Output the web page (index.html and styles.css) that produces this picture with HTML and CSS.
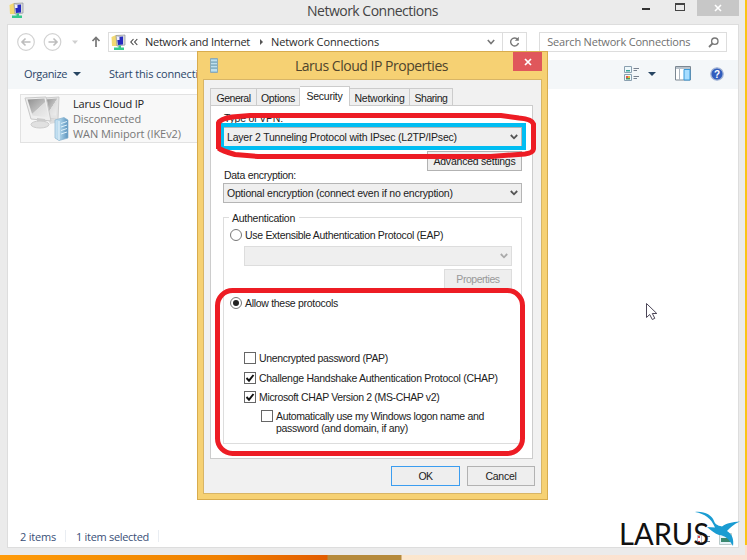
FILE: index.html
```html
<!DOCTYPE html>
<html lang="en">
<head>
<meta charset="utf-8">
<title>Network Connections</title>
<link rel="stylesheet" href="styles.css">
</head>
<body>
<div class="desktop">
  <main class="window">
    <header class="titlebar">
      <svg class="app-icon" width="16" height="17" viewBox="0 0 16 17"><use href="#netfolder"/></svg>
      <h1><span class="t-title">Network Connections</span></h1>
      <div class="controls"><i class="minimize"></i><i class="maximize"></i>
        <span class="close"><svg width="8" height="8" viewBox="0 0 8 8"><path d="M1 1l6 6M7 1L1 7" stroke="#fff" stroke-width="1.6"/></svg></span></div>
    </header>
    <section class="content">
      <nav class="navbar">
        <svg class="nav-arrows" width="86" height="20" viewBox="0 0 86 20" fill="none" stroke="#d2d2d2" stroke-width="1.2">
          <circle cx="9" cy="10" r="8.3"/><circle cx="35.5" cy="10" r="8.3"/>
          <path d="M5 10h8.5M8.500 6.500L5 10l3.500 3.500M31.500 10H40M36.500 6.500L40 10l-3.500 3.500" stroke="#bdbdbd" stroke-width="1.6"/>
          <path d="M55 8.500h6l-3 3.500z" fill="#cfcfcf" stroke="none"/>
          <path d="M79 15V5.500M75.500 9L79 5.500 82.500 9" stroke="#777" stroke-width="1.7"/>
        </svg>
        <div class="address">
          <svg width="16" height="17" viewBox="0 0 16 17"><use href="#netfolder"/></svg>
          <svg class="chev" width="8" height="8" viewBox="0 0 8 8" fill="none" stroke="#444" stroke-width="1.1"><path d="M3.500 1L.8 4l2.700 3M7.300 1L4.600 4l2.700 3"/></svg>
          <span class="crumb t-net">Network and Internet</span>
          <svg class="sep" width="5" height="8" viewBox="0 0 5 8"><path d="M1 1L4 4 1 7z" fill="#555"/></svg>
          <span class="crumb t-conn">Network Connections</span>
          <svg class="drop" width="8" height="6" viewBox="0 0 8 6"><path d="M.8 1L4 4.500 7.200 1" fill="none" stroke="#777" stroke-width="1.6"/></svg>
        </div>
        <div class="refresh"><svg width="11" height="12" viewBox="0 0 11 12"><path d="M8.800 3.500A4 4 0 1 0 9.500 7" fill="none" stroke="#777" stroke-width="1.4"/><path d="M9.800.8v4H5.800z" fill="#777"/></svg></div>
        <div class="search"><span class="t-search">Search Network Connections</span>
          <svg width="11" height="11" viewBox="0 0 11 11" fill="none" stroke="#777"><circle cx="6.8" cy="4.2" r="3.2" stroke-width="1.3"/><path d="M4.400 6.600L1 10" stroke-width="1.8"/></svg></div>
      </nav>
      <div class="toolbar">
        <span class="t-org">Organize</span><i class="caret"></i>
        <span class="start t-start">Start this connection</span>
        <div class="view-tools">
          <svg width="16" height="16" viewBox="0 0 16 16"><path d="M.5.500h7v6h-7zM.5 8.500h7v6h-7z" fill="#eef8fb" stroke="#8aa0b0"/><path d="M2 4h4v1.500H2z" fill="#38a59c"/><path d="M2 10h2v2H2z" fill="#d55"/><path d="M4 10h2v2H4z" fill="#e9bb37"/><path d="M2 12h4v1.500H2z" fill="#4a9b61"/><path d="M9.500 2.500H15M9.500 4.500H13M9.500 10.500H15M9.500 12.500H13" stroke="#78818f"/></svg>
          <i class="caret view-caret"></i>
          <svg class="pane" width="16" height="15" viewBox="0 0 16 15"><path d="M.5.500h15v13.500H.5z" fill="#fff" stroke="#7b8792"/><path d="M1 1h14v2H1z" fill="#b9c3cc"/><path d="M9 3.500h6V14H9z" fill="#a7ddff" stroke="#3898d8"/><path d="M4.500 3v11" stroke="#aab4be"/></svg>
          <svg class="help" width="14" height="14" viewBox="0 0 14 14"><circle cx="7" cy="7" r="6.2" fill="#315dbd" stroke="#a7b6d5" stroke-width="1.3"/><text x="7" y="10.8" text-anchor="middle">?</text></svg>
        </div>
      </div>
      <div class="files">
        <article class="connection">
          <svg width="48" height="46" viewBox="0 0 48 46">
            <defs><linearGradient id="scr" x2="1" y2="1"><stop stop-color="#8f8f8f"/><stop offset=".5" stop-color="#bdbdbd"/><stop offset=".52" stop-color="#dedede"/><stop offset="1" stop-color="#eee"/></linearGradient><linearGradient id="srv" x2="1"><stop stop-color="#cde6f5"/><stop offset=".45" stop-color="#a2cbe4"/><stop offset="1" stop-color="#5b93bd"/></linearGradient></defs>
            <path d="M20 2l15-1-1 22-12-1z" fill="#e4e4e4" stroke="#ccc"/><path d="M22 3.500l11-1-1 17-10-1z" fill="url(#scr)"/>
            <path d="M24 23l9-1 3 4-10 2z" fill="#ddd"/>
            <path d="M1 2l21-1 5 24-20-2z" fill="#eee" stroke="#c9c9c9"/><path d="M3.500 3.500l17-1 4 19-16-2z" fill="url(#scr)"/>
            <path d="M13 22l8 1 1 5h-9z" fill="#ccc"/><ellipse cx="16" cy="28.5" rx="9" ry="3.5" fill="#e1e1e1" stroke="#ccc"/>
            <path d="M31 24l9-2.500 4 2.500v18l-9 2.500-4-2.500z" fill="url(#srv)" stroke="#87b2ce" stroke-width=".7"/><path d="M35 25v19" stroke="#ecf7fd"/><path d="M37 27.500l6-2M37 31l6-2M37 34.500l6-2M37 38l6-2" stroke="#e0f2fb"/>
          </svg>
          <div class="details"><b class="t-larus">Larus Cloud IP</b><span class="t-disc">Disconnected</span><span class="t-wan">WAN Miniport (IKEv2)</span></div>
        </article>
      </div>
      <footer class="status"><span class="t-items">2 items</span><i></i><span class="t-sel">1 item selected</span><i></i></footer>
    </section>
  </main>

  <section class="dialog">
    <header class="dialog-title">
      <svg width="8" height="15" viewBox="0 0 8 15"><path d="M.5.500h7v14h-7z" fill="#9dcae0" stroke="#8fa9b2"/><path d="M1 3h6M1 6h6M1 9h6M1 12h6" stroke="#e2f4fb"/><path d="M1 4h6M1 7h6M1 10h6" stroke="#6f9aae"/></svg>
      <h2><span class="t-dlg">Larus Cloud IP Properties</span></h2>
      <span class="dialog-close"><svg width="8" height="8" viewBox="0 0 8 8"><path d="M1 1l6 6M7 1L1 7" stroke="#fff" stroke-width="1.7"/></svg></span>
    </header>
    <div class="dialog-body">
      <div class="tabs">
        <span class="tab gen"><span class="t-gen">General</span></span><span class="tab opt"><span class="t-opt">Options</span></span><span class="tab sec"><span class="t-sec">Security</span></span><span class="tab ntw"><span class="t-ntw">Networking</span></span><span class="tab shr"><span class="t-shr">Sharing</span></span>
      </div>
      <div class="panel">
        <div class="vpn-label"><span class="t-type">Type of VPN:</span></div>
        <div class="select vpn"><span class="t-layer">Layer 2 Tunneling Protocol with IPsec (L2TP/IPsec)</span><svg width="8" height="6" viewBox="0 0 8 6"><path d="M.8 1L4 4.300 7.200 1"/></svg></div>
        <div class="button advanced"><span class="t-adv">Advanced settings</span></div>
        <div class="enc-label"><span class="t-data">Data encryption:</span></div>
        <div class="select"><span class="t-optenc">Optional encryption (connect even if no encryption)</span><svg width="8" height="6" viewBox="0 0 8 6"><path d="M.8 1L4 4.300 7.200 1"/></svg></div>
        <div class="group">
          <div class="legend"><span class="t-auth">Authentication</span></div>
          <div class="row eap"><i class="radio"></i><span class="t-eap">Use Extensible Authentication Protocol (EAP)</span></div>
          <div class="select disabled"><svg width="8" height="6" viewBox="0 0 8 6"><path d="M.8 1L4 4.300 7.200 1"/></svg></div>
          <div class="button props"><span class="t-prop">Properties</span></div>
          <div class="row allow"><i class="radio on"></i><span class="t-allow">Allow these protocols</span></div>
          <div class="row check pap"><i class="box"></i><span class="t-pap">Unencrypted password (PAP)</span></div>
          <div class="row check"><i class="box"><svg width="10" height="10" viewBox="0 0 10 10"><path d="M1.500 5l2.500 2.700L8.500 2"/></svg></i><span class="t-chap">Challenge Handshake Authentication Protocol (CHAP)</span></div>
          <div class="row check ms"><i class="box"><svg width="10" height="10" viewBox="0 0 10 10"><path d="M1.500 5l2.500 2.700L8.500 2"/></svg></i><span class="t-ms">Microsoft CHAP Version 2 (MS-CHAP v2)</span></div>
          <div class="row check auto"><i class="box"></i><div class="lines"><span class="t-auto">Automatically use my Windows logon name and</span><span class="t-pass">password (and domain, if any)</span></div></div>
        </div>
      </div>
      <div class="actions"><div class="button ok"><span class="t-ok">OK</span></div><div class="button cancel"><span class="t-can">Cancel</span></div></div>
    </div>
  </section>

  <svg class="marks" width="747" height="560" viewBox="0 0 747 560" fill="none">
    <path d="M222 125H524V148H222z" stroke="#00bdf2" stroke-width="4"/>
    <path d="M218.500 149V123Q220 119 232 117L250 115.500H501L519 118Q532 119 533.500 124V149Q533 153 525 154L491 156.500H258L235 154.500Q222 151 218.500 148" stroke="#ed1c24" stroke-width="5"/>
    <rect x="217.5" y="290.5" width="305" height="163" rx="15" stroke="#ed1c24" stroke-width="5"/>
    <path d="M646.500 303.500v14l3.200-3 2.600 5 2.500-1.200-2.500-4.800h4.500z" fill="#fff" stroke="#4b4657"/>
  </svg>
  <div class="brand">
    <svg width="125" height="42" viewBox="0 0 125 42">
      <path d="M77.500 25.500h4v9h-4z" fill="#fff" stroke="#bbc"/><path d="M78 26h2v2h-2zM78 31h2v2h-2z" fill="#d44"/><path d="M85 26.500h5M85 31.500h5" stroke="#678"/>
      <path d="M99.500 23.500h12v11h-12z" fill="#e6f3f8" stroke="#bcc"/><path d="M101 28h9v4h-9z" fill="#3a8970"/>
      <path d="M75 2C84 1 92 5 94 11C95 14 97 15.500 102 16.500C107 13 112 12 120 11.500C114 14 110 17.500 107 21C112 24 114 29 113 36C109 29 105 25.500 99 25C95 24 91 20 87 17L95 17.500C91 8 85 4 75 2z" fill="#1a9cd2"/>
      <text class="logo-text" x="-1" y="35" textLength="90" lengthAdjust="spacingAndGlyphs">LARUS</text>
    </svg>
  </div>
</div>
<svg class="symbols" width="0" height="0"><symbol id="netfolder" viewBox="0 0 16 17"><path d="M.5 3L5 1h5v11H1z" fill="#f2d972"/><path d="M5 1.500l9-.5v10l-8 1z" fill="#d7d9dc" stroke="#8e929b" stroke-width=".7"/><path d="M6 3l6-.5v8l-5 .5z" fill="#252ac0"/><path d="M6 3h2.500v3H6z" fill="#eef"/><path d="M7.500 11.500h2.500v2h3v2.500H3v-2.500h4.500z" fill="#35c98c"/></symbol></svg>
</body>
</html>
```
FILE: styles.css
```css
* { box-sizing: border-box; }
body { margin: 0; width: 747px; height: 560px; overflow: hidden; font-family: "Open Sans", sans-serif; }
svg { display: block; flex: none; }
i { display: block; flex: none; }
.symbols { position: absolute; }
.desktop { position: relative; width: 747px; height: 560px; overflow: hidden; background: linear-gradient(#fbc414, #fbc414) right top / 2px 545px no-repeat, linear-gradient(90deg, #ff9b0a 0, #f58f04 110px, #f08000 220px, #e25c00 327px, #b58a3c 328px, #b58a3c 401px, #fbe6cd 402px, #fbe0d3 100%); }
.window { width: 745px; height: 555px; padding: 0 6px 7px 7px; background: #ebebeb; }
.titlebar { display: flex; height: 24px; position: relative; }
.app-icon { margin: 2px 0 0 2px; }
.titlebar h1 { flex: 1; margin: 0 0 0 282px; font-size: 14px; line-height: 22px; font-weight: 400; color: #444; white-space: nowrap; }
.controls { display: flex; }
.minimize { width: 8px; height: 2px; margin: 8px 25px 0 0; background: #333; }
.maximize { width: 10px; height: 8px; margin: 3px 12px 0 0; border: 1px solid #444; border-top-width: 2px; }
.close { display: flex; width: 42px; height: 16px; background: #c7c7c7; justify-content: center; align-items: center; }
.content { display: flex; flex-direction: column; width: 732px; height: 524px; background: #fff; border: 1px solid #ddd; }
.navbar { display: flex; height: 35px; padding: 7px 11px 8px 9px; align-items: center; font-size: 11px; white-space: nowrap; }
.nav-arrows { width: 86px; }
.address { display: flex; align-items: center; width: 396px; height: 20px; margin-left: 5px; padding-left: 2px; border: 1px solid #ddd; color: #2b2b2b; }
.crumb { line-height: 14px; }
.chev { margin: 0 7px 0 3px; }
.sep { margin: 0 7px 0 9px; }
.drop { margin-left: auto; margin-right: 7px; }
.refresh { display: flex; align-items: center; justify-content: center; width: 24px; height: 20px; border: 1px solid #ddd; border-left: 0; }
.search { display: flex; align-items: center; justify-content: space-between; width: 188px; height: 20px; margin-left: 12px; padding: 0 7px; border: 1px solid #ddd; color: #707070; }
.t-search { line-height: 14px; }
.toolbar { display: flex; align-items: center; height: 29px; padding: 0 14px 2px 16px; background: #f4f7f9; color: #2c4668; font-size: 11px; white-space: nowrap; }
.caret { width: 0; height: 0; margin-left: 6px; border: 4px solid transparent; border-top-color: #274562; border-bottom: 0; }
.start { margin-left: 28px; }
.view-tools { display: flex; align-items: center; margin-left: auto; }
.view-caret { margin-left: 8px; }
.pane { margin-left: 19px; }
.help { margin-left: 19px; }
.help text { font: bold 10px "Liberation Sans", sans-serif; fill: #fff; }
.files { flex: 1; padding: 5px 12px; }
.connection { display: flex; width: 230px; height: 49px; border: 1px solid #e2e2e2; background: #f8f8f8; padding: 1px 3px; font-size: 11px; line-height: 15px; color: #777; white-space: nowrap; }
.details { display: flex; flex-direction: column; align-items: flex-start; margin-left: 1px; }
.details b { font-weight: 400; color: #222; }
.status { display: flex; align-items: center; height: 22px; padding: 0 12px; font-size: 11px; color: #3a4f77; }
.status i { width: 1px; height: 12px; margin: 0 10px 0 9px; background: #e9edf2; }
.dialog { position: absolute; left: 197px; top: 51px; width: 351px; height: 449px; padding: 0 5px; background: #f6d173; border: 1px solid #d8ac4e; }
.dialog-title { display: flex; height: 27px; padding-left: 7px; }
.dialog-title > svg { margin-top: 6px; }
.dialog-title h2 { flex: 1; margin: 0 0 0 77px; font-size: 14px; line-height: 28px; font-weight: 400; color: #4f442c; white-space: nowrap; }
.dialog-close { display: flex; align-items: center; justify-content: center; width: 29px; height: 19px; background: #e0575b; }
.dialog-body { height: 415px; border: 1px solid #d8b566; background: #f1f1f1; padding: 6px 6px 0; font: 10.5px "Liberation Sans", sans-serif; color: #222; }
.tabs { display: flex; height: 19px; align-items: flex-end; white-space: nowrap; }
.tab { display: flex; justify-content: center; align-items: center; height: 17px; padding-top: 1px; border: 1px solid #ccc; border-bottom: 0; border-left-width: 0; background: #efefef; }
.tab.gen { width: 47px; border-left-width: 1px; }
.tab.opt { width: 43px; }
.tab.sec { width: 50px; height: 20px; margin-bottom: -1px; background: #fff; padding: 0 0 1px; }
.tab.ntw { width: 60px; }
.tab.shr { width: 43px; }
.panel { width: 323px; height: 354px; border: 1px solid #ccc; background: #fff; padding: 0 10px 0 12px; white-space: nowrap; }
.vpn-label { height: 21px; padding-left: 1px; line-height: 25px; }
.select { display: flex; align-items: center; justify-content: space-between; width: 299px; height: 20px; padding: 0 3px; border: 1px solid #b5b5b5; background: #efefef; }
.select path { fill: none; stroke: #555; stroke-width: 1.8; }
.button { display: flex; align-items: center; justify-content: center; height: 20px; border: 1px solid #b2b2b2; background: #eee; }
.advanced { width: 95px; margin: 4px 0 0 204px; }
.enc-label { height: 12px; padding-left: 1px; line-height: 8px; }
.group { width: 299px; height: 227px; margin-top: 14px; border: 1px solid #ddd; }
.legend { width: 70px; height: 12px; margin: -6px 0 0 5px; padding-left: 3px; background: #fff; line-height: 12px; }
.row { display: flex; align-items: center; height: 14px; }
.eap { margin: 4px 0 0 6px; }
.radio { width: 12px; height: 12px; margin-right: 3px; border: 1px solid #777; border-radius: 50%; background: #fff; }
.radio.on { padding: 2px; background: #222 content-box; background-clip: content-box; }
.disabled { width: 268px; margin: 4px 0 0 20px; border-color: #ddd; justify-content: flex-end; }
.disabled path { stroke: #aaa; }
.props { width: 68px; margin: 3px 0 0 220px; border-color: #ddd; color: #999; }
.allow { margin: 7px 0 0 6px; }
.check { margin: 6px 0 0 20px; }
.check.pap { margin-top: 41px; }
.check.ms { margin-top: 5px; }
.box { width: 12px; height: 12px; margin-right: 3px; border: 1px solid #666; background: #fff; }
.box path { fill: none; stroke: #111; stroke-width: 1.9; }
.auto { margin-left: 37px; height: 26px; align-items: flex-start; }
.lines { display: flex; flex-direction: column; align-items: flex-start; line-height: 12px; }
.actions { display: flex; justify-content: flex-end; gap: 7px; margin-top: 7px; padding-right: 0; }
.ok { width: 69px; border-color: #3b9df0; }
.cancel { width: 68px; }
.marks { position: absolute; left: 0; top: 0; }
.brand { position: absolute; left: 620px; top: 510px; }
.logo-text { font: 31px Lato, sans-serif; fill: #111; }

/* Tracking per label */
.t-title { letter-spacing: -.503px; }
.t-net { letter-spacing: -.268px; }
.t-conn { letter-spacing: -.129px; }
.t-search { letter-spacing: -.198px; }
.t-org { letter-spacing: -.375px; }
.t-start { letter-spacing: -.18px; }
.t-larus { letter-spacing: -.182px; }
.t-disc { letter-spacing: -.138px; }
.t-wan { letter-spacing: -.063px; }
.t-items { letter-spacing: -.208px; }
.status .t-sel { letter-spacing: -.303px; }
.t-dlg { letter-spacing: -.481px; }
.t-gen, .t-prop, .t-shr { letter-spacing: -.46px; }
.t-opt, .t-eap, .t-allow, .t-pass { letter-spacing: -.3px; }
.t-sec, .t-ntw, .t-type, .t-auth { letter-spacing: -.25px; }
.t-layer { letter-spacing: -.2px; }
.t-adv, .t-optenc { letter-spacing: -.22px; }
.t-data, .t-chap, .t-can { letter-spacing: -.28px; }
.t-pap { letter-spacing: -.33px; }
.t-ms, .t-auto { letter-spacing: -.35px; }
.t-ok { letter-spacing: -.6px; }
```
